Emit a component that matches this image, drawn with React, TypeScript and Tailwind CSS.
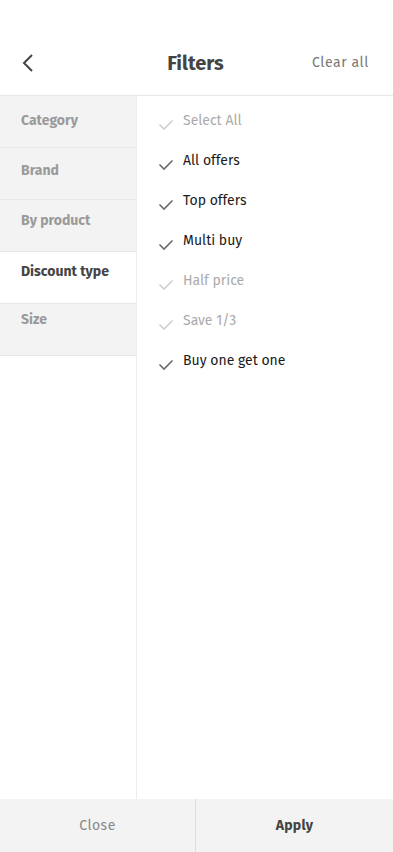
import React from "react";

const cats = [
  { name: "Category", active: false, pt: "pt-[14px]" },
  { name: "Brand", active: false, pt: "pt-[12px]" },
  { name: "By product", active: false, pt: "pt-[10px]" },
  { name: "Discount type", active: true, pt: "pt-[9px]" },
  { name: "Size", active: false, pt: "pt-[5px]" },
];

const opts = [
  { name: "Select All", on: false },
  { name: "All offers", on: true },
  { name: "Top offers", on: true },
  { name: "Multi buy", on: true },
  { name: "Half price", on: false },
  { name: "Save 1/3", on: false },
  { name: "Buy one get one", on: true },
];

function Check({ on }: { on: boolean }) {
  return (
    <svg width="16" height="12" viewBox="0 0 16 12" className="mt-[8px] shrink-0">
      <path d="M1.5 5.5 L6 10 L14.5 1.5" fill="none" stroke={on ? "#6b6b6b" : "#d0d0d0"} strokeWidth="1.6" />
    </svg>
  );
}

export default function App() {
  return (
    <div className="w-[393px] h-[852px] flex flex-col bg-white" style={{ fontFamily: "'Fira Sans', Lato, 'Noto Sans', sans-serif" }}>
      <div className="h-[96px] shrink-0 border-b border-[#e8e8e8] flex items-center px-[20px] pt-[30px] relative">
        <svg width="14" height="20" viewBox="0 0 14 20" className="ml-[1px]">
          <path d="M11 2 L3 10 L11 18" fill="none" stroke="#444" strokeWidth="2" />
        </svg>
        <div className="flex-1 text-center text-[20px] font-bold text-[#444] ml-[44px]">Filters</div>
        <div className="text-[14px] text-[#777] tracking-[0.6px] mr-[4px]">Clear all</div>
      </div>
      <div className="flex flex-1 min-h-0">
        <div className="w-[137px] shrink-0 border-r border-[#ececec] flex flex-col">
          {cats.map((c) => (
            <div
              key={c.name}
              className={`h-[52px] border-b border-[#e8e8e8] pl-[21px] ${c.pt} text-[14px] font-bold ${c.active ? "bg-white text-[#444]" : "bg-[#f3f3f3] text-[#9a9a9a]"}`}
            >
              {c.name}
            </div>
          ))}
        </div>
        <div className="flex-1 flex flex-col pt-[15px] pl-[21px]">
          {opts.map((o) => (
            <div key={o.name} className="h-[40px] flex items-start gap-[9px]">
              <Check on={o.on} />
              <span className={`text-[14px] leading-[20px] ${o.on ? "text-[#1a1a1a]" : "text-[#aaa]"}`}>{o.name}</span>
            </div>
          ))}
        </div>
      </div>
      <div className="h-[53px] shrink-0 flex bg-[#f3f3f3]">
        <div className="w-[196px] flex items-center justify-center text-[14px] text-[#888] tracking-[0.5px] border-r border-[#d8dde6]">Close</div>
        <div className="flex-1 flex items-center justify-center text-[14px] font-bold text-[#444] tracking-[0.3px]">Apply</div>
      </div>
    </div>
  );
}
